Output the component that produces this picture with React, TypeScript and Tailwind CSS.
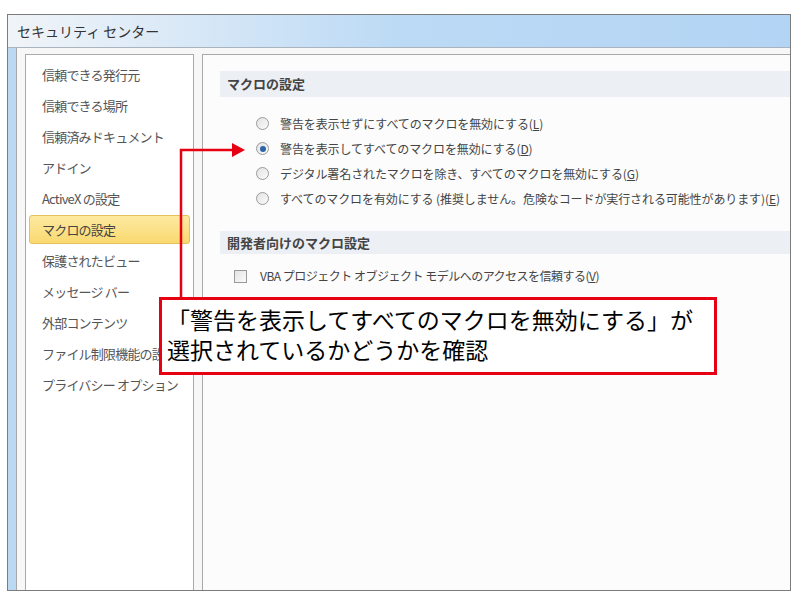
import React from "react";

const font = { fontFamily: '"Noto Sans CJK JP", "Noto Sans", sans-serif' };

const sideItems = [
  "信頼できる発行元",
  "信頼できる場所",
  "信頼済みドキュメント",
  "アドイン",
  "ActiveX の設定",
  "マクロの設定",
  "保護されたビュー",
  "メッセージ バー",
  "外部コンテンツ",
  "ファイル制限機能の設定",
  "プライバシー オプション",
];

const macroOptions = [
  { label: "警告を表示せずにすべてのマクロを無効にする", key: "L", checked: false },
  { label: "警告を表示してすべてのマクロを無効にする", key: "D", checked: true },
  { label: "デジタル署名されたマクロを除き、すべてのマクロを無効にする", key: "G", checked: false },
  {
    label: "すべてのマクロを有効にする (推奨しません。危険なコードが実行される可能性があります)",
    key: "E",
    checked: false,
  },
];

function Radio({ checked }: { checked: boolean }) {
  return (
    <span className="w-[13px] h-[13px] rounded-full border border-[#9a9a9a] bg-gradient-to-br from-[#e2e2e2] to-[#fbfbfb] flex items-center justify-center shrink-0">
      {checked && <span className="w-[6px] h-[6px] rounded-full bg-[#2b64a8]" />}
    </span>
  );
}

export default function App() {
  return (
    <div className="relative w-[800px] h-[600px] bg-white pt-[14px] pl-[7px]" style={font}>
      <div className="w-[784px] h-[577px] border border-[#7c7c7c] flex flex-col bg-[#f4f7fa]">
        {/* title bar */}
        <div className="h-[33px] flex items-center pl-[9px] bg-gradient-to-r from-[#f0f4f8] via-[#bcdaf5] to-[#b3d4f4] text-[14px] text-[#333] border-b border-[#a9b4bf]">
          セキュリティ センター
        </div>

        <div className="flex flex-1 min-h-0">
          <div className="w-[8px] bg-[#bcd9f3]" />
          <div className="flex-1 flex flex-col border-l border-[#a8a8a8] bg-[#f7f7f7]">
            <div className="h-[6px]" />
            <div className="flex flex-1 min-h-0 pl-[8px]">
              {/* sidebar */}
              <div className="w-[169px] border-l border-t border-r border-[#a9a9a9] bg-white pt-[5px]">
                {sideItems.map((item) => {
                  const active = item === "マクロの設定";
                  return (
                    <div
                      key={item}
                      className={
                        active
                          ? "h-[29px] mb-[2px] mx-[3px] px-[12px] flex items-center rounded-[3px] border border-[#e2c15e] bg-gradient-to-b from-[#fde9a0] to-[#f9d96f] text-[13px] tracking-[-0.8px] text-[#444] whitespace-nowrap overflow-hidden"
                          : "h-[29px] mb-[2px] mx-[3px] px-[12px] flex items-center border border-transparent text-[13px] tracking-[-0.8px] text-[#555] whitespace-nowrap overflow-hidden"
                      }
                    >
                      {item}
                    </div>
                  );
                })}
              </div>

              {/* main panel */}
              <div className="ml-[8px] flex-1 border-l border-t border-[#a9a9a9] bg-[#fcfcfc] pt-[16px] pl-[17px]">
                <div className="h-[26px] bg-[#eceff4] flex items-center pl-[7px] text-[13px] font-bold text-[#444]">
                  マクロの設定
                </div>
                <div className="pt-[14px] pl-[36px] flex flex-col">
                  {macroOptions.map((o) => (
                    <div key={o.key} className="h-[25px] flex items-center gap-[11px] text-[12px] text-[#444] whitespace-nowrap">
                      <Radio checked={o.checked} />
                      <span className="tracking-[-0.1px]">
                        {o.label}(<span className="underline">{o.key}</span>)
                      </span>
                    </div>
                  ))}
                </div>

                <div className="mt-[20px] h-[23px] bg-[#eceff4] flex items-center pl-[7px] text-[13px] font-bold text-[#444]">
                  開発者向けのマクロ設定
                </div>
                <div className="mt-[10px] pl-[14px] h-[24px] flex items-center gap-[13px] text-[12px] text-[#444] whitespace-nowrap">
                  <span className="w-[13px] h-[13px] border border-[#9a9a9a] bg-gradient-to-br from-[#e4e4e4] to-[#fafafa] shrink-0" />
                  <span className="tracking-[-0.5px]">
                    VBA プロジェクト オブジェクト モデルへのアクセスを信頼する(<span className="underline">V</span>)
                  </span>
                </div>
              </div>
            </div>
          </div>
        </div>
      </div>

      {/* red arrow */}
      <svg className="absolute left-[170px] top-[140px] pointer-events-none" width="80" height="162" viewBox="0 0 80 162">
        <polyline points="11,160 11,10 66,10" fill="none" stroke="#e60012" strokeWidth="2.5" />
        <polygon points="62,3 75,10 62,17" fill="#e60012" />
      </svg>

      {/* callout */}
      <div className="absolute left-[159px] top-[297px] w-[558px] h-[78px] border-[3px] border-[#e60012] bg-white pl-[5px] pt-[4px] text-[23px] leading-[30px] text-black">
        <div className="whitespace-nowrap">「警告を表示してすべてのマクロを無効にする」が</div>
        <div className="whitespace-nowrap">選択されているかどうかを確認</div>
      </div>
    </div>
  );
}
